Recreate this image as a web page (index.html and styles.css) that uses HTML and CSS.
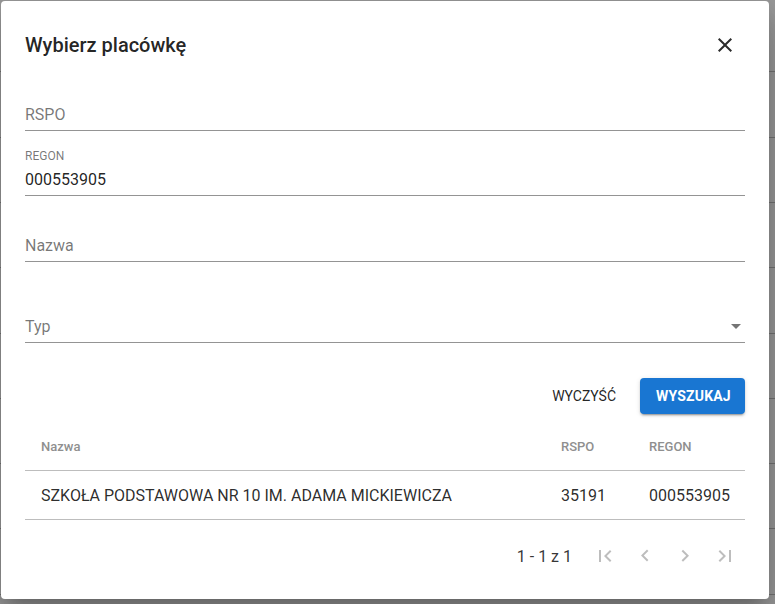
FILE: index.html
```html
<!DOCTYPE html>
<html lang="pl">
<head>
  <meta charset="UTF-8">
  <meta name="viewport" content="width=device-width, initial-scale=1.0">
  <title>Wybierz placówkę</title>
  <link rel="stylesheet" href="styles.css">
</head>
<body>
  <div class="dialog">
    <div class="dialog-title">
      <h2>Wybierz placówkę</h2>
      <button type="button" class="icon-btn close-btn" aria-label="Zamknij">
        <svg viewBox="0 0 24 24" width="24" height="24"><path d="M19 6.41L17.59 5 12 10.59 6.41 5 5 6.41 10.59 12 5 17.59 6.41 19 12 13.41 17.59 19 19 17.59 13.41 12z"/></svg>
      </button>
    </div>

    <div class="dialog-content">
      <div class="field field-first">
        <div class="control"><span class="placeholder">RSPO</span></div>
      </div>

      <div class="field field-filled">
        <div class="field-label">REGON</div>
        <div class="control"><span class="value">000553905</span></div>
      </div>

      <div class="field field-third">
        <div class="control"><span class="placeholder">Nazwa</span></div>
      </div>

      <div class="field field-select">
        <div class="control">
          <span class="placeholder">Typ</span>
          <svg class="select-arrow" viewBox="0 0 24 24" width="24" height="24"><path d="M7 10l5 5 5-5z"/></svg>
        </div>
      </div>

      <div class="actions">
        <button type="button" class="btn btn-text">Wyczyść</button>
        <button type="button" class="btn btn-primary">Wyszukaj</button>
      </div>

      <table class="results">
        <colgroup>
          <col class="col-name">
          <col class="col-rspo">
          <col class="col-regon">
        </colgroup>
        <thead>
          <tr><th>Nazwa</th><th>RSPO</th><th>REGON</th></tr>
        </thead>
        <tbody>
          <tr><td>SZKOŁA PODSTAWOWA NR 10 IM. ADAMA MICKIEWICZA</td><td>35191</td><td>000553905</td></tr>
        </tbody>
      </table>

      <div class="pagination">
        <span class="page-info">1 - 1 z 1</span>
        <button type="button" class="icon-btn page-btn" disabled>
          <svg viewBox="0 0 24 24" width="24" height="24"><path d="M18.41 16.59L13.82 12l4.59-4.59L17 6l-6 6 6 6zM6 6h2v12H6z"/></svg>
        </button>
        <button type="button" class="icon-btn page-btn" disabled>
          <svg viewBox="0 0 24 24" width="24" height="24"><path d="M15.41 16.09l-4.58-4.59 4.58-4.59L14 5.5l-6 6 6 6z"/></svg>
        </button>
        <button type="button" class="icon-btn page-btn" disabled>
          <svg viewBox="0 0 24 24" width="24" height="24"><path d="M8.59 16.34l4.58-4.59-4.58-4.59L10 5.75l6 6-6 6z"/></svg>
        </button>
        <button type="button" class="icon-btn page-btn" disabled>
          <svg viewBox="0 0 24 24" width="24" height="24"><path d="M5.59 7.41L10.18 12l-4.59 4.59L7 18l6-6-6-6zM16 6h2v12h-2z"/></svg>
        </button>
      </div>
    </div>
  </div>
</body>
</html>
```

FILE: styles.css
```css
html, body {
  height: 100%;
}

body {
  margin: 0;
  padding: 1px 0 0 1px;
  box-sizing: border-box;
  overflow: hidden;
  font-family: Roboto, "Helvetica Neue", Arial, sans-serif;
  color: rgba(0, 0, 0, 0.87);
  background-color: #9b9b9b;
  background-image: repeating-linear-gradient(180deg, transparent 0, transparent 64.3px, #747474 64.3px, #747474 65.3px);
  background-position: 0 7px;
}

.dialog {
  width: 768px;
  height: 598px;
  background-color: #ffffff;
  border-radius: 4px;
  box-shadow: 0 11px 15px -7px rgba(0, 0, 0, 0.2), 0 24px 38px 3px rgba(0, 0, 0, 0.14), 0 9px 46px 8px rgba(0, 0, 0, 0.12);
  overflow: hidden;
}

.dialog-title {
  display: flex;
  align-items: center;
  justify-content: space-between;
  height: 48px;
  margin-top: 20px;
  padding: 0 20px 0 24px;
}

.dialog-title h2 {
  margin: 0;
  font-size: 20px;
  font-weight: 500;
  line-height: 32px;
  color: rgba(0, 0, 0, 0.87);
}

.icon-btn {
  display: flex;
  align-items: center;
  justify-content: center;
  padding: 0;
  border: none;
  background: none;
  cursor: pointer;
}

.icon-btn svg {
  fill: currentColor;
}

.close-btn {
  width: 48px;
  height: 48px;
  color: #2b2b2b;
}

.dialog-content {
  padding: 0 24px;
}

.field {
  height: 48px;
  padding-top: 16px;
  box-sizing: border-box;
  margin-top: 17px;
}

.field-first {
  margin-top: 14px;
}

.field-third {
  margin-top: 18px;
}

.field-select {
  margin-top: 33px;
}

.field-filled {
  padding-top: 0;
}

.field-label {
  height: 16px;
  font-size: 12px;
  line-height: 16px;
  color: rgba(0, 0, 0, 0.54);
}

.control {
  position: relative;
  height: 32px;
  padding: 6px 0 7px;
  box-sizing: border-box;
  border-bottom: 1px solid rgba(0, 0, 0, 0.42);
  font-size: 16px;
  line-height: 19px;
}

.placeholder {
  color: rgba(0, 0, 0, 0.54);
}

.value {
  color: rgba(0, 0, 0, 0.87);
}

.select-arrow {
  position: absolute;
  right: -3px;
  top: 3px;
  fill: rgba(0, 0, 0, 0.54);
}

.actions {
  display: flex;
  justify-content: flex-end;
  gap: 16px;
  margin-top: 35px;
}

.btn {
  height: 36px;
  border: none;
  border-radius: 4px;
  font-family: inherit;
  font-size: 14px;
  font-weight: 500;
  letter-spacing: 0.2px;
  text-transform: uppercase;
  cursor: pointer;
}

.btn-text {
  padding: 0 8px;
  font-weight: 400;
  letter-spacing: 0;
  color: rgba(0, 0, 0, 0.87);
  background: none;
}

.btn-primary {
  width: 105px;
  padding: 0 16px;
  font-weight: 700;
  color: #ffffff;
  background-color: #1976d2;
  box-shadow: 0 3px 1px -2px rgba(0, 0, 0, 0.2), 0 2px 2px 0 rgba(0, 0, 0, 0.14), 0 1px 5px 0 rgba(0, 0, 0, 0.12);
}

.results {
  width: 100%;
  margin-top: 8px;
  border-collapse: collapse;
  table-layout: fixed;
}

.col-rspo {
  width: 88px;
}

.col-regon {
  width: 112px;
}

.results th,
.results td {
  padding: 0 16px;
  text-align: left;
  border-bottom: 1px solid #bdbdbd;
  white-space: nowrap;
}

.results th {
  height: 48px;
  font-size: 13px;
  font-weight: 500;
  color: #8f8f8f;
}

.results td {
  height: 48px;
  font-size: 16px;
  color: rgba(0, 0, 0, 0.84);
}

.pagination {
  display: flex;
  justify-content: flex-end;
  align-items: center;
  height: 40px;
  margin-top: 16px;
}

.page-info {
  margin-right: 13px;
  font-size: 16px;
  color: rgba(0, 0, 0, 0.8);
}

.page-btn {
  width: 40px;
  height: 40px;
  color: rgba(0, 0, 0, 0.26);
  cursor: default;
}
```
